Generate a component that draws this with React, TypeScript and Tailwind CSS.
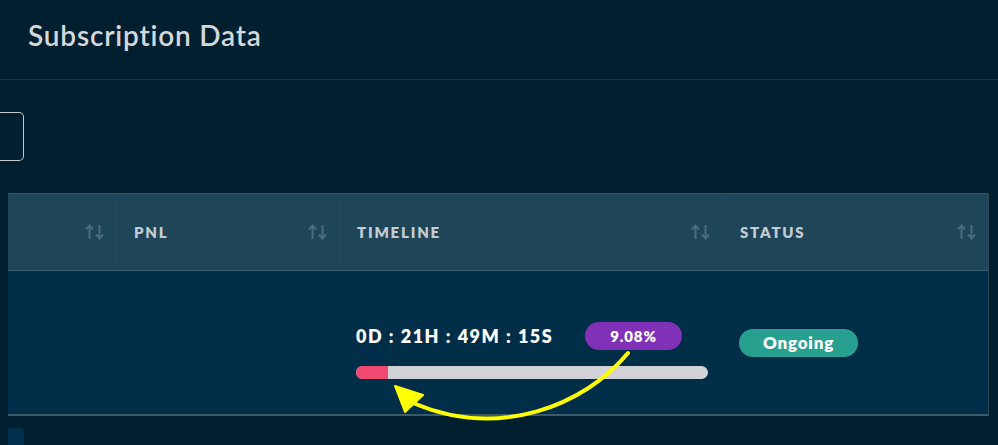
const SortIcon = () => (
  <svg width="19" height="16" viewBox="0 0 19 16" fill="none" stroke="#4a6b7e" strokeWidth="2">
    <path d="M4.5 15V2M1 5.5L4.5 1.5L8 5.5" />
    <path d="M14.5 1V14M11 10.5L14.5 14.5L18 10.5" />
  </svg>
)

function HeaderCell({ label, width, last }: { label?: string; width: string; last?: boolean }) {
  return (
    <div className={`${width} flex items-center justify-between pl-[17px] pr-[12px] ${last ? '' : 'border-r border-[#214a5f]'}`}>
      <span className="text-[15px] font-extrabold tracking-[1.8px] text-[#c3ccd3]">{label}</span>
      <SortIcon />
    </div>
  )
}

export default function App() {
  return (
    <div className="relative w-[998px] h-[445px] overflow-hidden bg-[#021f2f]" style={{ fontFamily: 'Lato, "Noto Sans", sans-serif' }}>
      {/* title */}
      <div className="h-[80px] border-b border-[#0b3a52] pl-[28px] pt-[14px]">
        <h1 className="text-[28px] font-semibold text-[#d3d8dc] tracking-[0.8px]">Subscription Data</h1>
      </div>

      {/* filter box (cut off) */}
      <div className="mt-[32px] w-[24px] h-[49px] border border-l-0 border-[#c5cace] rounded-r-[5px]" />

      {/* table */}
      <div className="ml-[8px] mt-[32px] w-[981px] border-b-2 border-[#3b5a6c] border-r border-r-[#2a4a5c]">
        <div className="flex h-[78px] bg-[#1f4559] border-t border-[#2d546a] border-b border-b-[#3a6078]">
          <HeaderCell width="w-[109px]" />
          <HeaderCell label="PNL" width="w-[223px]" />
          <HeaderCell label="TIMELINE" width="w-[383px]" />
          <HeaderCell label="STATUS" width="flex-1" last />
        </div>
        <div className="flex h-[143px] bg-[#002d47]">
          <div className="w-[109px]" />
          <div className="w-[223px]" />
          <div className="w-[383px] pl-[16px] pt-[51px]">
            <div className="flex items-center w-[352px]">
              <span className="text-[18px] font-extrabold text-white tracking-[1.5px]">0D : 21H : 49M : 15S</span>
              <span className="ml-auto mr-[26px] w-[97px] h-[28px] rounded-full bg-[#8131b8] flex items-center justify-center text-[15px] font-extrabold text-white tracking-[0.9px]">
                9.08%
              </span>
            </div>
            <div className="mt-[16px] w-[352px] h-[13px] rounded-full bg-[#d1d2d7] overflow-hidden">
              <div className="h-full bg-[#f04870]" style={{ width: '9.08%' }} />
            </div>
          </div>
          <div className="flex-1 pl-[16px] pt-[58px]">
            <span className="inline-flex items-center justify-center w-[119px] h-[28px] rounded-full bg-[#27a08f] text-[17px] font-extrabold text-white tracking-[0.8px]">
              Ongoing
            </span>
          </div>
        </div>
      </div>

      {/* pagination stub (cut off) */}
      <div className="ml-[8px] mt-[12px] w-[16px] h-[20px] rounded-tr-[4px] bg-[#00304b]" />

      {/* annotation arrow */}
      <svg className="absolute left-0 top-0 pointer-events-none" width="998" height="445">
        <path d="M628 353 C 585 405, 500 440, 413 403" stroke="#ffff00" strokeWidth="4" fill="none" strokeLinecap="round" />
        <polygon points="395,386 405,412 423,395" fill="#ffff00" stroke="#ffff00" strokeWidth="2" strokeLinejoin="round" />
      </svg>
    </div>
  )
}
